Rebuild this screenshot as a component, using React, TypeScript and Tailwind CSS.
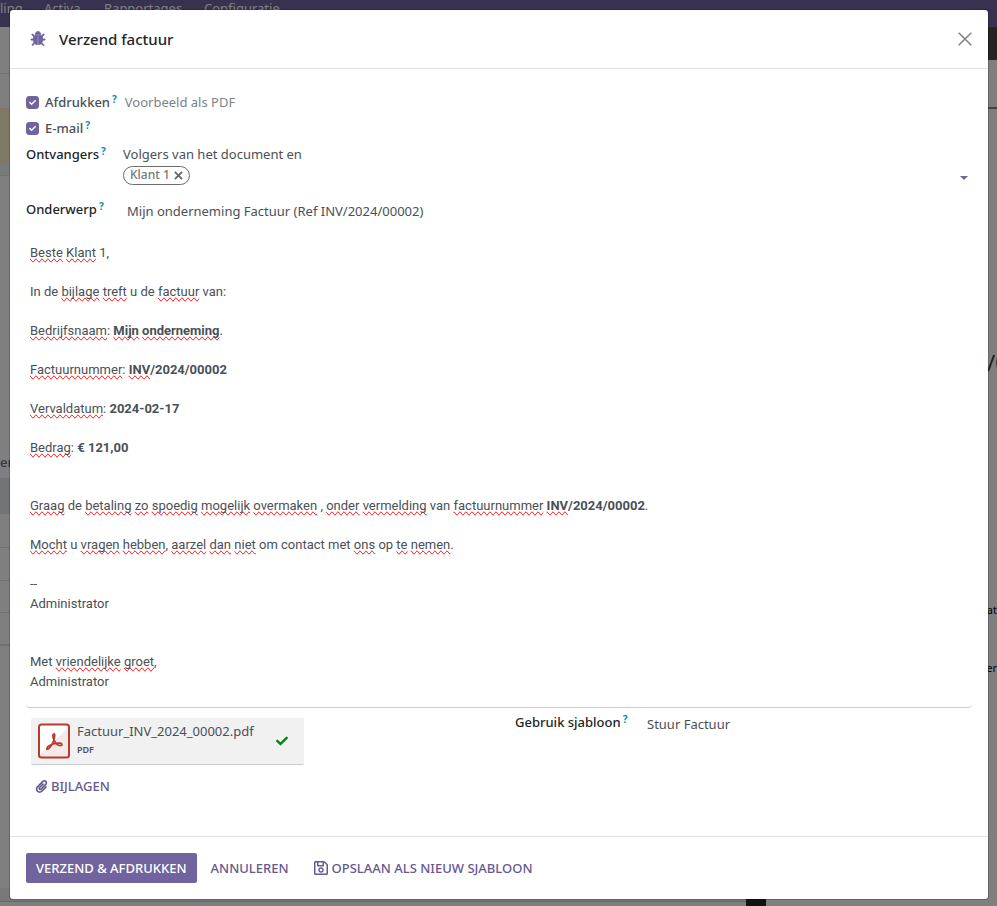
import React, { useState } from "react";
import { FaCheck, FaPaperclip, FaRegSave } from "react-icons/fa";

const BugIcon = () => (
  <svg viewBox="0 0 1792 1792" className="h-4 w-4 fill-[#71639e] stroke-[#71639e] stroke-[90]" aria-hidden="true">
    <path d="M1696 960q0 26-19 45t-45 19h-224q0 171-67 290l208 209q19 19 19 45t-19 45q-18 19-45 19t-45-19l-198-197q-5 5-15 13t-42 28.5-65 36.5-82 29-97 13v-896h-128v896q-51 0-101.5-13.5t-87-33-66-39-43.5-32.5l-15-14-183 207q-20 21-48 21-24 0-43-16-19-18-20.5-44.5t15.5-46.5l202-227q-58-114-58-274h-224q-26 0-45-19t-19-45 19-45 45-19h224v-294l-173-173q-19-19-19-45t19-45 45-19 45 19l173 173h844l173-173q19-19 45-19t45 19 19 45-19 45l-173 173v294h224q26 0 45 19t19 45zm-480-576h-640q0-133 93.5-226.5t226.5-93.5 226.5 93.5 93.5 226.5z" />
  </svg>
);

const PdfIcon = () => (
  <svg viewBox="0 0 32 36" className="h-9 w-8 shrink-0" aria-hidden="true">
    <rect x="1" y="1.5" width="30" height="33" rx="2.5" fill="#fff" />
    <path d="M31 4v28a2.5 2.5 0 0 1-2.5 2.5H3.5Q1.500 34.500 1.500 32z" fill="#f6e9e8" />
    <rect x="1" y="1.5" width="30" height="33" rx="2.5" fill="none" stroke="#b63a2f" strokeWidth="2" />
    <path
      d="M16 10.800c-1.500 0-1.500 2.500 0 6 1.500 3.300 4.200 6 6.700 5.700 1.900-.3 1.600-2-.7-2.300-3.700-.5-8.300.8-11.500 3-2 1.500-2.200 3.300-.8 3 2-.6 4.300-4.500 5.800-8.200 1.200-3.200 1.800-7.200.5-7.200z"
      fill="none"
      stroke="#b63a2f"
      strokeWidth="1.7"
    />
  </svg>
);

const Help = () => <sup className="relative -top-1 ml-[2px] text-[10px] leading-none font-bold text-[#0a8fad]">?</sup>;

// word flagged by the spell checker
const Sp: React.FC<{ children: React.ReactNode }> = ({ children }) => (
  <span className="[text-decoration-line:spelling-error]">{children}</span>
);

interface CheckProps {
  id: string;
  label: string;
}

const CheckField: React.FC<CheckProps> = ({ id, label }) => {
  const [checked, setChecked] = useState(true);

  return (
    <div className="flex items-center">
      <span className="grid h-[13px] w-[13px] place-items-center">
        <input
          id={id}
          type="checkbox"
          checked={checked}
          onChange={(e) => setChecked(e.target.checked)}
          className="col-start-1 row-start-1 h-[13px] w-[13px] appearance-none rounded-[3px] border border-[#71639e] checked:bg-[#71639e]"
        />
        {checked && <FaCheck className="pointer-events-none col-start-1 row-start-1 text-[7px] text-white" />}
      </span>
      <label htmlFor={id} className="ml-[6px] font-medium">
        {label}
        <Help />
      </label>
    </div>
  );
};

const Background = () => (
  <div className="absolute inset-0 flex flex-col overflow-hidden bg-white" aria-hidden="true">
    <nav className="flex h-[27px] shrink-0 items-center bg-[#71639e] pb-3 text-white">
      <span className="w-11">ling</span>
      <span className="w-15">Activa</span>
      <span className="w-25">Rapportages</span>
      <span>Configuratie</span>
    </nav>
    <div className="flex flex-1">
      <div className="flex flex-1 flex-col">
        <div className="h-[47px] border-b border-[#dee2e6]" />
        <div className="h-[34px]" />
        <div className="h-[55px] bg-[#fff0c8]" />
        <div className="h-[13px] border-b border-[#dee2e6] bg-[#f3f5f7]" />
        <div className="flex h-[302px] items-end pb-[6px] font-medium text-[#71639e]">er</div>
        <div className="h-9 bg-[#e4e7ea]" />
        <div className="h-[34px] border-b border-[#dee2e6]" />
        <div className="h-[33px] border-b border-[#dee2e6]" />
        <div className="h-8 border-b border-[#dee2e6]" />
        <div className="h-[33px] border-b-2 border-[#dee2e6]" />
        <div className="flex-1" />
        <div className="h-[14px] border-b border-[#ccc] bg-[#eef0f2]" />
        <div className="h-1" />
      </div>
      <div className="flex w-5 items-end bg-white">
        <div className="h-8 w-full bg-[#262626]" />
      </div>
      <div className="flex w-[231px] flex-col items-end text-[11px] text-black">
        <div className="h-[33px] w-full bg-[#484848]" />
        <div className="h-[49px] w-full border-b-2 border-[#888]" />
        <div className="flex h-[263px] w-[10px] items-end text-[22px] text-[#333]">/0</div>
        <div className="flex h-[248px] items-end">at</div>
        <div className="flex h-[58px] items-end">er</div>
      </div>
    </div>
    <div className="absolute inset-0 bg-black/50" />
  </div>
);

const MailBody = () => (
  <div
    role="textbox"
    aria-label="Bericht"
    aria-multiline="true"
    contentEditable
    suppressContentEditableWarning
    spellCheck={false}
    className="space-y-[19px] rounded-sm border-b border-[#ccc] px-1 pb-[15px] font-[Roboto,sans-serif] leading-5 outline-none"
  >
    <p><Sp>Beste</Sp> <Sp>Klant</Sp> 1,</p>
    <p>In de <Sp>bijlage</Sp> <Sp>treft</Sp> u de <Sp>factuur</Sp> van:</p>
    <p><Sp>Bedrijfsnaam</Sp>: <b><Sp>Mijn</Sp> <Sp>onderneming</Sp></b>.</p>
    <p><Sp>Factuurnummer</Sp>: <b><Sp>INV</Sp>/2024/00002</b></p>
    <p><Sp>Vervaldatum</Sp>: <b>2024-02-17</b></p>
    <p><Sp>Bedrag</Sp>: <b>€ 121,00</b></p>
    <p className="pt-[19px]">
      <Sp>Graag</Sp> de <Sp>betaling</Sp> <Sp>zo</Sp> <Sp>spoedig</Sp> <Sp>mogelijk</Sp> <Sp>overmaken</Sp> ,{" "}
      <Sp>onder</Sp> <Sp>vermelding</Sp> van <Sp>factuurnummer</Sp> <b><Sp>INV</Sp>/2024/00002</b>.
    </p>
    <p>
      <Sp>Mocht</Sp> u <Sp>vragen</Sp> <Sp>hebben</Sp>, <Sp>aarzel</Sp> <Sp>dan</Sp> <Sp>niet</Sp> om contact met{" "}
      <Sp>ons</Sp> op <Sp>te</Sp> <Sp>nemen</Sp>.
    </p>
    <p>
      --
      <br />
      Administrator
    </p>
    <p className="pt-[19px]">
      Met <Sp>vriendelijke</Sp> <Sp>groet</Sp>,
      <br />
      Administrator
    </p>
  </div>
);

export default function App() {
  const [subject, setSubject] = useState("Mijn onderneming Factuur (Ref INV/2024/00002)");
  const [template, setTemplate] = useState("Stuur Factuur");

  return (
    <div className="relative min-h-screen pt-[9px] pr-2 pb-[6px] pl-[9px] font-['Noto_Sans',sans-serif] text-[13px] leading-5 text-[#495057]">
      <Background />
      <div role="dialog" aria-labelledby="title" className="relative rounded-sm border border-black/20 bg-white bg-clip-padding">
        <header className="flex h-[59px] items-center border-b border-[#dee2e6] px-4">
          <span className="ml-1">
            <BugIcon />
          </span>
          <h4 id="title" className="ml-[13px] flex-1 text-[15px] font-medium text-[#212529]">
            Verzend factuur
          </h4>
          <button type="button" aria-label="Sluiten" className="text-[#808080]">
            <svg viewBox="0 0 14 14" className="h-[14px] w-[14px]" fill="none" stroke="currentColor" strokeWidth="1.5">
              <path d="M.7.7l12.600 12.600M13.300.7L.7 13.300" />
            </svg>
          </button>
        </header>

        <main className="px-4 pt-[23px]">
          <div className="flex items-center">
            <CheckField id="print" label="Afdrukken" />
            <span className="ml-2 text-[#7c8288]">Voorbeeld als PDF</span>
          </div>
          <div className="mt-[6px]">
            <CheckField id="email" label="E-mail" />
          </div>

          <div className="mt-[6px] grid grid-cols-[97px_1fr]">
            <label htmlFor="recipients" className="font-medium text-[#212529]">
              Ontvangers
              <Help />
            </label>
            <div>
              <p>Volgers van het document en</p>
              <div className="flex items-center">
                <span className="flex h-[19px] items-center rounded-full border border-[#6c6c6c] px-[6px] text-xs font-medium text-[#777]">
                  Klant 1
                  <button type="button" aria-label="Verwijderen" className="ml-1">
                    <svg viewBox="0 0 10 10" className="h-[9px] w-[9px]" stroke="#666" strokeWidth="2">
                      <path d="M1 1l8 8M9 1L1 9" />
                    </svg>
                  </button>
                </span>
                <input id="recipients" className="h-[22px] flex-1 outline-none" />
                <button type="button" aria-label="Kies ontvanger" className="mr-1 pt-[6px]">
                  <svg viewBox="0 0 8 4" className="h-1 w-2 fill-[#71639e]">
                    <path d="M0 0h8L4 4z" />
                  </svg>
                </button>
              </div>
            </div>
          </div>

          <div className="mt-[13px] grid grid-cols-[97px_1fr] items-start">
            <label htmlFor="subject" className="font-medium text-[#212529]">
              Onderwerp
              <Help />
            </label>
            <input
              id="subject"
              value={subject}
              onChange={(e) => setSubject(e.target.value)}
              className="h-6 px-1 outline-none"
            />
          </div>

          <div className="mt-5">
            <MailBody />
          </div>

          <div className="grid grid-cols-2 gap-8 pt-[10px] pb-10">
            <div>
              <div className="ml-[5px] flex h-[47px] w-[273px] items-center rounded-xs border-b border-[#ccc] bg-[#f1f1f1] pl-[7px]">
                <PdfIcon />
                <div className="ml-[7px] flex-1 pb-[2px]">
                  <p className="leading-5">Factuur_INV_2024_00002.pdf</p>
                  <p className="text-[9px] leading-[18px] font-semibold">PDF</p>
                </div>
                <FaCheck className="mr-4 text-xs text-[#008818]" />
              </div>
              <button type="button" className="mt-[11px] ml-[9px] flex items-center gap-[3px] font-medium text-[#66598f]">
                <FaPaperclip className="text-[13px]" />
                BIJLAGEN
              </button>
            </div>
            <div className="-mt-[6px] grid grid-cols-[128px_1fr] items-start">
              <label htmlFor="template" className="font-medium text-[#212529]">
                Gebruik sjabloon
                <Help />
              </label>
              <input
                id="template"
                value={template}
                onChange={(e) => setTemplate(e.target.value)}
                className="h-6 px-1 outline-none"
              />
            </div>
          </div>
        </main>

        <footer className="flex h-[63px] items-center border-t border-[#dee2e6] px-4 font-medium text-[#66598f]">
          <button type="button" className="h-[30px] rounded-xs bg-[#71639e] px-[10px] text-white">
            VERZEND &amp; AFDRUKKEN
          </button>
          <button type="button" className="ml-[14px]">
            ANNULEREN
          </button>
          <button type="button" className="ml-6 flex items-center gap-[3px]">
            <FaRegSave className="text-base" />
            OPSLAAN ALS NIEUW SJABLOON
          </button>
        </footer>
      </div>
    </div>
  );
}
